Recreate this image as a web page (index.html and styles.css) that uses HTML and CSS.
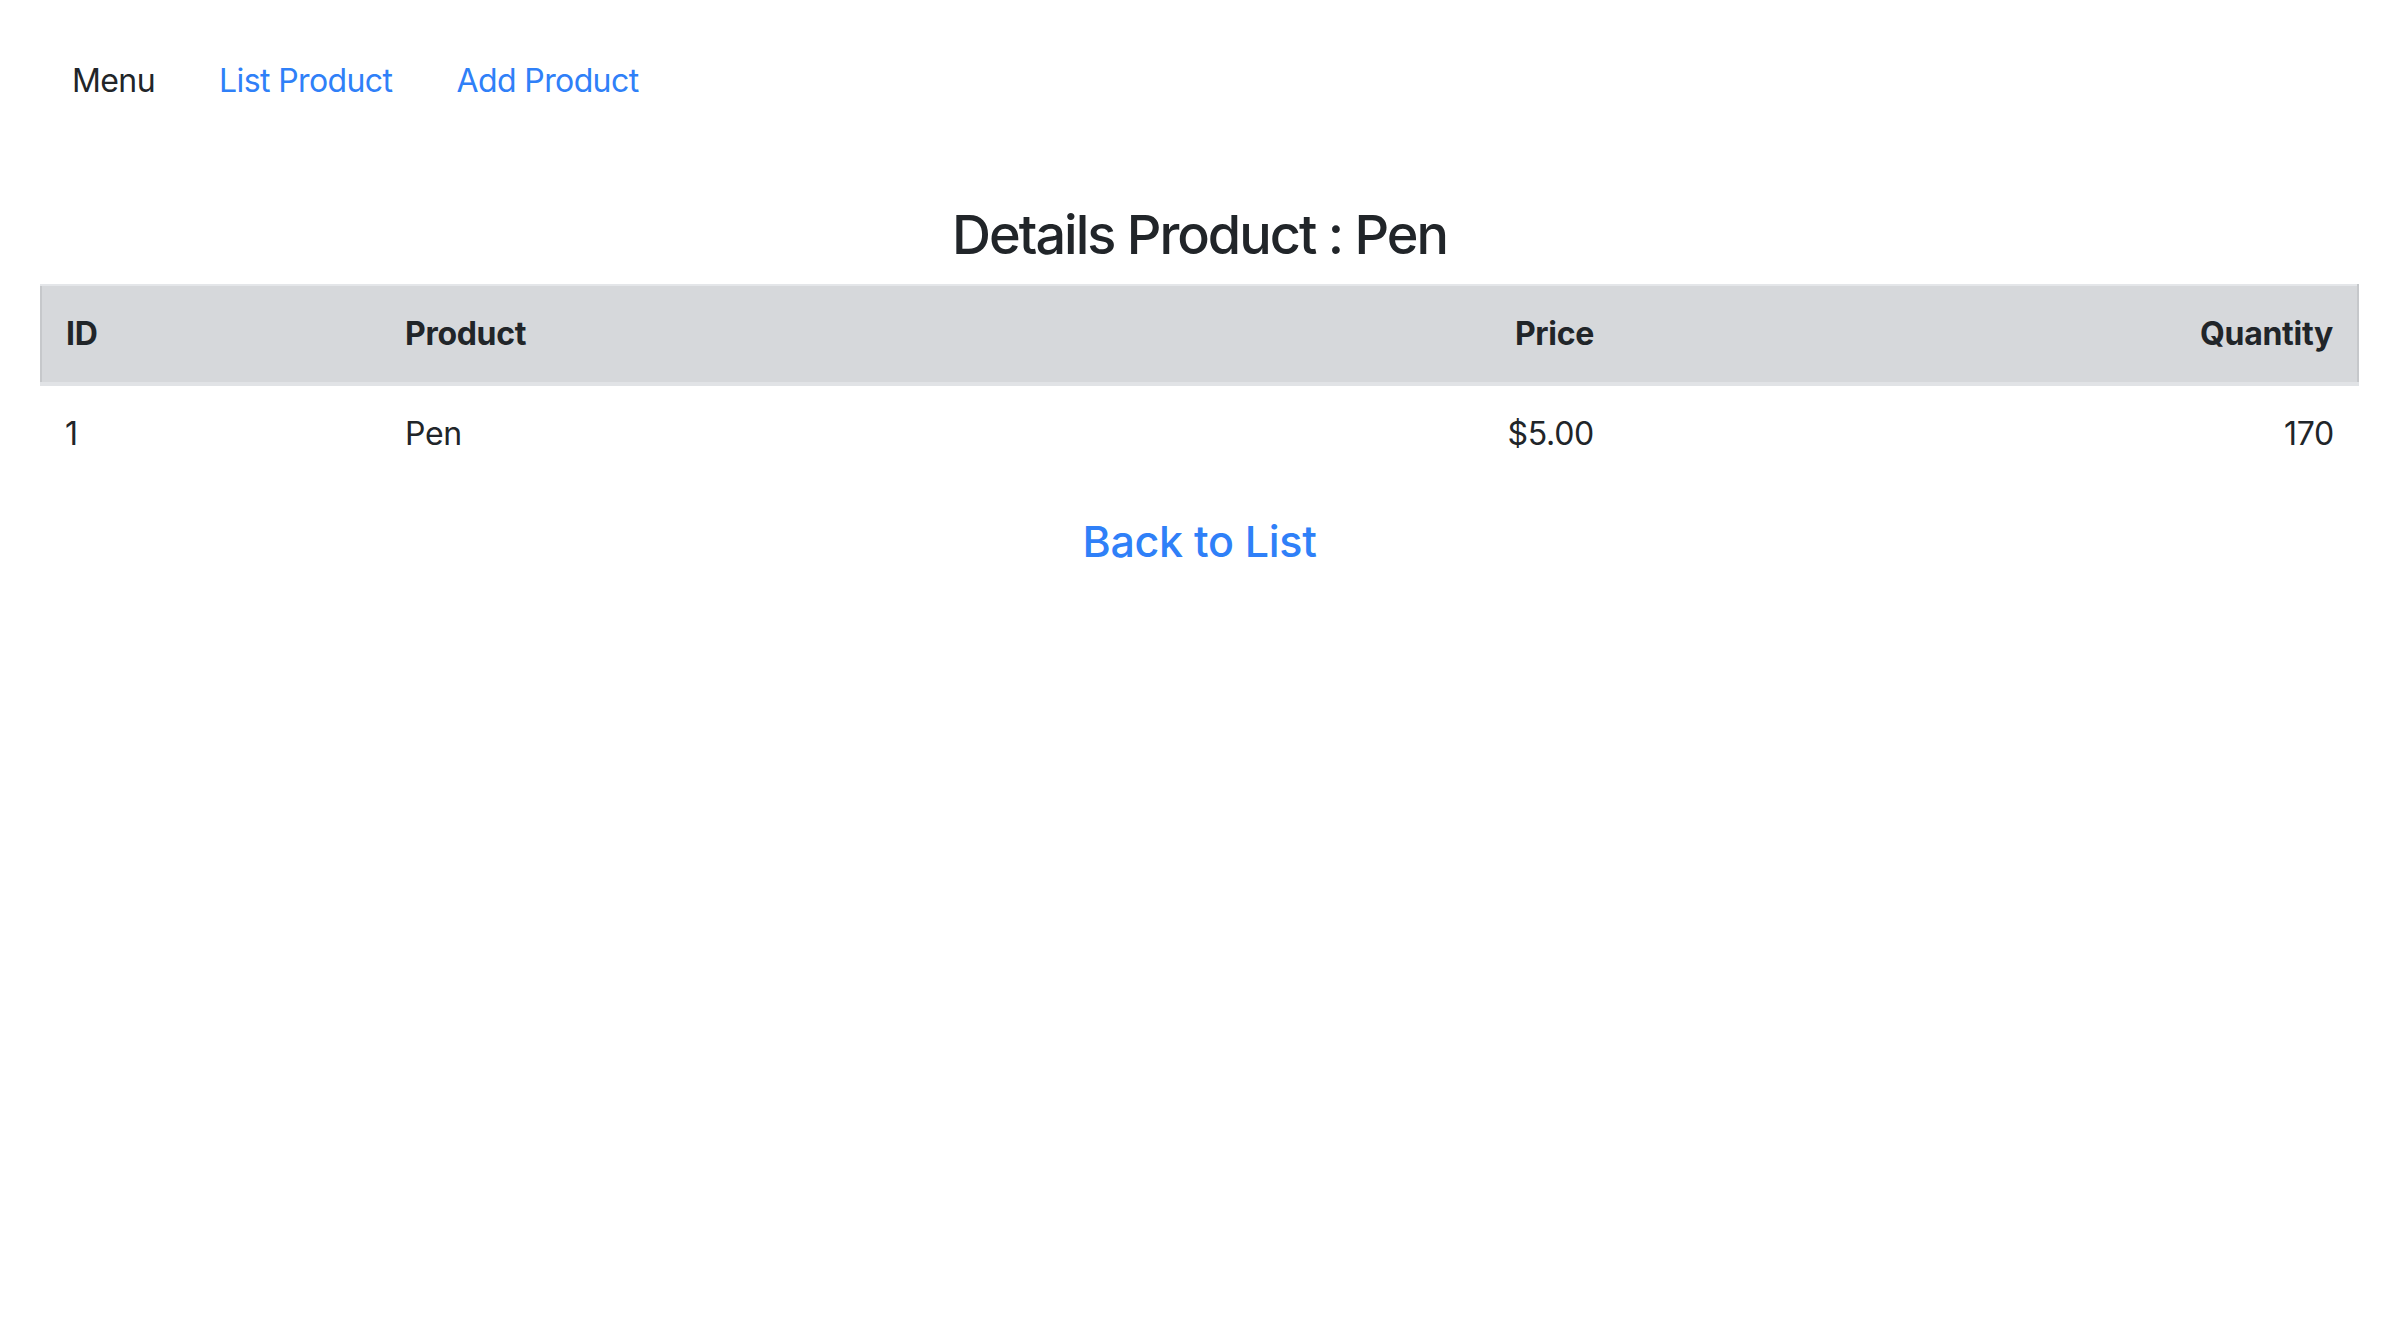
FILE: index.html
```html
<!DOCTYPE html>
<html lang="en">
<head>
<meta charset="utf-8">
<title>Details Product</title>
<link rel="stylesheet" href="styles.css">
</head>
<body>
<div class="page">
  <nav class="nav">
    <span class="nav-item nav-brand">Menu</span>
    <a class="nav-item nav-link" href="#">List Product</a>
    <a class="nav-item nav-link" href="#">Add Product</a>
  </nav>
  <h3 class="title">Details Product : Pen</h3>
  <table class="table">
    <colgroup>
      <col class="c-id">
      <col class="c-product">
      <col class="c-price">
      <col class="c-qty">
    </colgroup>
    <thead>
      <tr>
        <th class="first">ID</th>
        <th>Product</th>
        <th class="num">Price</th>
        <th class="num last">Quantity</th>
      </tr>
    </thead>
    <tbody>
      <tr>
        <td>1</td>
        <td>Pen</td>
        <td class="num">$5.00</td>
        <td class="num">170</td>
      </tr>
    </tbody>
  </table>
  <div class="back">
    <a class="back-link" href="#">Back to List</a>
  </div>
</div>
</body>
</html>
```

FILE: styles.css
```css
* { box-sizing: border-box; }
html, body { margin: 0; padding: 0; background: #fff; }
body {
  font-family: Inter, "Noto Sans", "Liberation Sans", sans-serif;
  font-size: 32px;
  line-height: 1.5;
  color: #212529;
  letter-spacing: -0.3px;
}
.page {
  padding: 41px 41px 40px 40px;
}
.nav {
  display: flex;
  align-items: center;
}
.nav-item {
  padding: 16px 32px;
  text-decoration: none;
  letter-spacing: -0.6px;
}
.nav-brand { color: #212529; }
.nav-link { color: #2f80f8; }
.title {
  margin: 82px 0 16px;
  font-size: 54px;
  font-weight: 500;
  line-height: 1.2;
  text-align: center;
  letter-spacing: -2px;
}
.table {
  width: 100%;
  border-collapse: collapse;
  table-layout: fixed;
}
.c-id { width: 340px; }
.c-product { width: 1000px; }
.c-price { width: 237px; }
.c-qty { width: auto; }
.table th, .table td {
  padding: 24px;
  text-align: left;
  vertical-align: top;
}
.table thead th {
  background: #d6d8db;
  border-top: 2px solid #e4e6e9;
  border-bottom: 4px solid #e1e3e6;
  font-weight: 700;
}
.table thead th.first { border-left: 2px solid #c6c8cb; }
.table thead th.last { border-right: 2px solid #c6c8cb; }
.table .num { text-align: right; }
.back {
  margin-top: 34px;
  text-align: center;
}
.back-link {
  font-size: 43px;
  line-height: 1.2;
  color: #2f80f8;
  text-decoration: none;
  font-weight: 500;
  letter-spacing: -0.3px;
}
```
